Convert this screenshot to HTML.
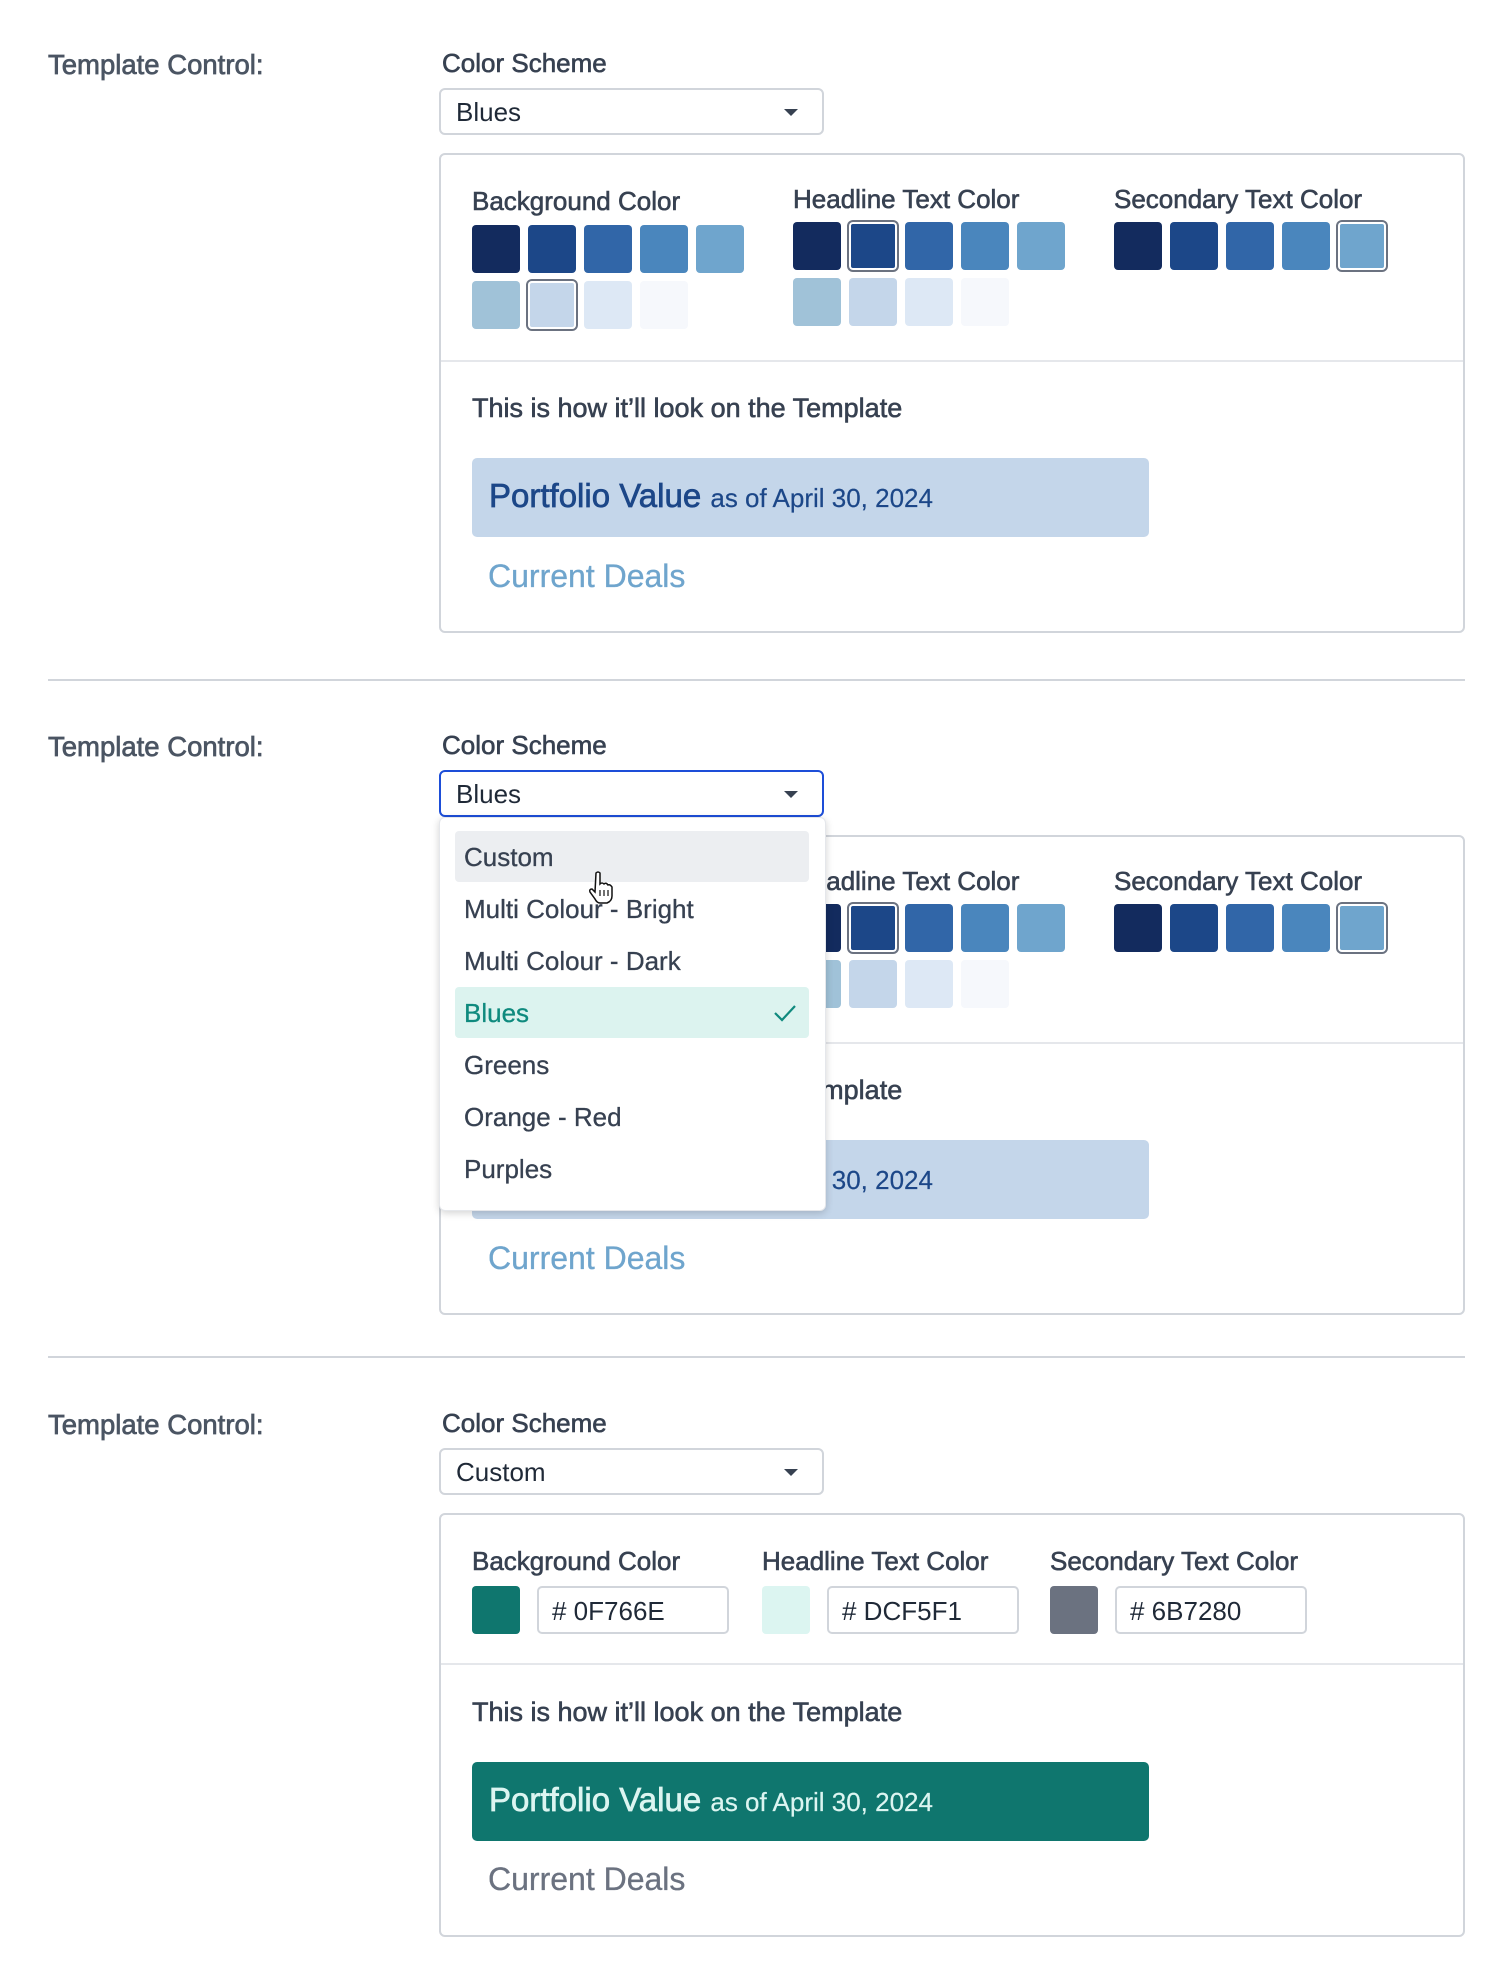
<!DOCTYPE html>
<html><head><meta charset="utf-8"><style>
*{box-sizing:border-box;margin:0;padding:0}
body{width:1512px;height:1984px;background:#fff;font-family:"Liberation Sans",Arial,sans-serif;color:#374151;position:relative;overflow:hidden}
.a{position:absolute;white-space:nowrap}
.lbl{font-size:27.5px;color:#4b5563;-webkit-text-stroke:.7px #4b5563}
.h{font-size:26px;color:#374151;-webkit-text-stroke:.6px #374151}
.h.t{font-size:27px}
.sel{position:absolute;left:439px;width:385px;height:47px;border:2px solid #d1d5db;border-radius:6px;font-size:26px;color:#1f2937;padding:7px 0 0 15px}
.sel:after{content:"";position:absolute;right:24px;top:19px;border-left:7px solid transparent;border-right:7px solid transparent;border-top:7px solid #374151}
.panel{position:absolute;left:439px;width:1026px;border:2px solid #d1d5db;border-radius:6px}
.div{position:absolute;left:0;right:0;height:2px;background:#e5e7eb}
.sw{position:absolute;width:48px;height:48px;border-radius:4px}
.sw.s{box-shadow:0 0 0 2px #fff inset,0 0 0 2px #6b7280}
.bar{position:absolute;left:31px;width:677px;height:79px;border-radius:5px}
.pv{position:absolute;left:17px;top:19px;font-size:33px;-webkit-text-stroke:.7px currentColor;white-space:nowrap}
.pv span{font-size:26px;-webkit-text-stroke:.2px currentColor}
.cd{position:absolute;left:47px;font-size:32px;white-space:nowrap;-webkit-text-stroke:.3px currentColor}
.hr{position:absolute;left:48px;width:1417px;height:2px;background:#d1d5db}
.inp{position:absolute;width:192px;height:48px;border:2px solid #d1d5db;border-radius:5px;font-size:26px;color:#1f2937;padding:8px 0 0 13px}
.dd{position:absolute;left:439px;top:817px;width:387px;height:394px;background:#fff;border-radius:6px;box-shadow:0 2px 8px rgba(0,0,0,.18);border:1px solid #e5e7eb}
.it{position:absolute;left:15px;width:354px;height:51px;border-radius:4px;font-size:26px;color:#374151;padding:11px 0 0 9px;-webkit-text-stroke:.3px currentColor}
</style></head><body>

<!-- Section 1 -->
<div class="a lbl" style="left:48px;top:49px">Template Control:</div>
<div class="a h" style="left:442px;top:48px">Color Scheme</div>
<div class="sel" style="top:88px">Blues</div>
<div class="panel" style="top:153px;height:480px">
  <div class="div" style="top:205px"></div>
  <div class="a h" style="left:31px;top:31px">Background Color</div>
  <div class="a h" style="left:352px;top:29px">Headline Text Color</div>
  <div class="a h" style="left:673px;top:29px">Secondary Text Color</div>
  <div class="sw" style="left:31px;top:70px;background:#132b5e"></div>
  <div class="sw" style="left:87px;top:70px;background:#1c4788"></div>
  <div class="sw" style="left:143px;top:70px;background:#3166a8"></div>
  <div class="sw" style="left:199px;top:70px;background:#4a86bd"></div>
  <div class="sw" style="left:255px;top:70px;background:#6fa5cd"></div>
  <div class="sw" style="left:31px;top:126px;background:#a0c2d8"></div>
  <div class="sw s" style="left:87px;top:126px;background:#c4d6ea"></div>
  <div class="sw" style="left:143px;top:126px;background:#dde8f5"></div>
  <div class="sw" style="left:199px;top:126px;background:#f6f8fc"></div>
  <div class="sw" style="left:352px;top:67px;background:#132b5e"></div>
  <div class="sw s" style="left:408px;top:67px;background:#1c4788"></div>
  <div class="sw" style="left:464px;top:67px;background:#3166a8"></div>
  <div class="sw" style="left:520px;top:67px;background:#4a86bd"></div>
  <div class="sw" style="left:576px;top:67px;background:#6fa5cd"></div>
  <div class="sw" style="left:352px;top:123px;background:#a0c2d8"></div>
  <div class="sw" style="left:408px;top:123px;background:#c4d6ea"></div>
  <div class="sw" style="left:464px;top:123px;background:#dde8f5"></div>
  <div class="sw" style="left:520px;top:123px;background:#f6f8fc"></div>
  <div class="sw" style="left:673px;top:67px;background:#132b5e"></div>
  <div class="sw" style="left:729px;top:67px;background:#1c4788"></div>
  <div class="sw" style="left:785px;top:67px;background:#3166a8"></div>
  <div class="sw" style="left:841px;top:67px;background:#4a86bd"></div>
  <div class="sw s" style="left:897px;top:67px;background:#6fa5cd"></div>
  <div class="a h t" style="left:31px;top:238px">This is how it’ll look on the Template</div>
  <div class="bar" style="top:303px;background:#c4d6ea"><div class="pv" style="color:#1c4788">Portfolio Value <span>as of April 30, 2024</span></div></div>
  <div class="cd" style="top:403px;color:#6fa5cd">Current Deals</div>
</div>
<div class="hr" style="top:679px"></div>

<!-- Section 2 -->
<div class="a lbl" style="left:48px;top:731px">Template Control:</div>
<div class="a h" style="left:442px;top:730px">Color Scheme</div>
<div class="sel" style="top:770px;border-color:#1d4ed8">Blues</div>
<div class="panel" style="top:835px;height:480px">
  <div class="div" style="top:205px"></div>
  <div class="a h" style="left:352px;top:29px">Headline Text Color</div>
  <div class="a h" style="left:673px;top:29px">Secondary Text Color</div>
  <div class="sw" style="left:352px;top:67px;background:#132b5e"></div>
  <div class="sw s" style="left:408px;top:67px;background:#1c4788"></div>
  <div class="sw" style="left:464px;top:67px;background:#3166a8"></div>
  <div class="sw" style="left:520px;top:67px;background:#4a86bd"></div>
  <div class="sw" style="left:576px;top:67px;background:#6fa5cd"></div>
  <div class="sw" style="left:352px;top:123px;background:#a0c2d8"></div>
  <div class="sw" style="left:408px;top:123px;background:#c4d6ea"></div>
  <div class="sw" style="left:464px;top:123px;background:#dde8f5"></div>
  <div class="sw" style="left:520px;top:123px;background:#f6f8fc"></div>
  <div class="sw" style="left:673px;top:67px;background:#132b5e"></div>
  <div class="sw" style="left:729px;top:67px;background:#1c4788"></div>
  <div class="sw" style="left:785px;top:67px;background:#3166a8"></div>
  <div class="sw" style="left:841px;top:67px;background:#4a86bd"></div>
  <div class="sw s" style="left:897px;top:67px;background:#6fa5cd"></div>
  <div class="a h t" style="left:31px;top:238px">This is how it’ll look on the Template</div>
  <div class="bar" style="top:303px;background:#c4d6ea"><div class="pv" style="color:#1c4788">Portfolio Value <span>as of April 30, 2024</span></div></div>
  <div class="cd" style="top:403px;color:#6fa5cd">Current Deals</div>
</div>
<div class="dd">
  <div class="it" style="top:13px;background:#eceef1">Custom</div>
  <div class="it" style="top:65px">Multi Colour - Bright</div>
  <div class="it" style="top:117px">Multi Colour - Dark</div>
  <div class="it" style="top:169px;background:#dcf3ef;color:#0f8a7e">Blues
    <svg style="position:absolute;right:12px;top:16px" width="24" height="20" viewBox="0 0 24 20"><path d="M2 10 L9 17 L22 3" fill="none" stroke="#0f8a7e" stroke-width="2.2"/></svg></div>
  <div class="it" style="top:221px">Greens</div>
  <div class="it" style="top:273px">Orange - Red</div>
  <div class="it" style="top:325px">Purples</div>
  <svg style="position:absolute;left:148px;top:52px" width="28" height="34" viewBox="0 0 28 34"><path d="M8 3 q2-2 4 0 v11 q2-2 4 0 q2-2 4 1 q2-1 4 2 v9 q0 5-5 7 h-7 q-3 0-5-4 l-5-7 q-1-3 2-3 l3 3 z" fill="#fff" stroke="#111" stroke-width="1.5"/><path d="M12 20v6M16 20v6M20 20v6" stroke="#111" stroke-width="1.2"/></svg>
</div>
<div class="hr" style="top:1356px"></div>

<!-- Section 3 -->
<div class="a lbl" style="left:48px;top:1409px">Template Control:</div>
<div class="a h" style="left:442px;top:1408px">Color Scheme</div>
<div class="sel" style="top:1448px">Custom</div>
<div class="panel" style="top:1513px;height:424px">
  <div class="div" style="top:148px"></div>
  <div class="a h" style="left:31px;top:31px">Background Color</div>
  <div class="a h" style="left:321px;top:31px">Headline Text Color</div>
  <div class="a h" style="left:609px;top:31px">Secondary Text Color</div>
  <div class="sw" style="left:31px;top:71px;background:#0f766e"></div>
  <div class="inp" style="left:96px;top:71px"># 0F766E</div>
  <div class="sw" style="left:321px;top:71px;background:#dcf5f1"></div>
  <div class="inp" style="left:386px;top:71px"># DCF5F1</div>
  <div class="sw" style="left:609px;top:71px;background:#6b7280"></div>
  <div class="inp" style="left:674px;top:71px"># 6B7280</div>
  <div class="a h t" style="left:31px;top:182px">This is how it’ll look on the Template</div>
  <div class="bar" style="top:247px;background:#0f766e"><div class="pv" style="color:#dcf5f1">Portfolio Value <span>as of April 30, 2024</span></div></div>
  <div class="cd" style="top:346px;color:#6b7280">Current Deals</div>
</div>
</body></html>
